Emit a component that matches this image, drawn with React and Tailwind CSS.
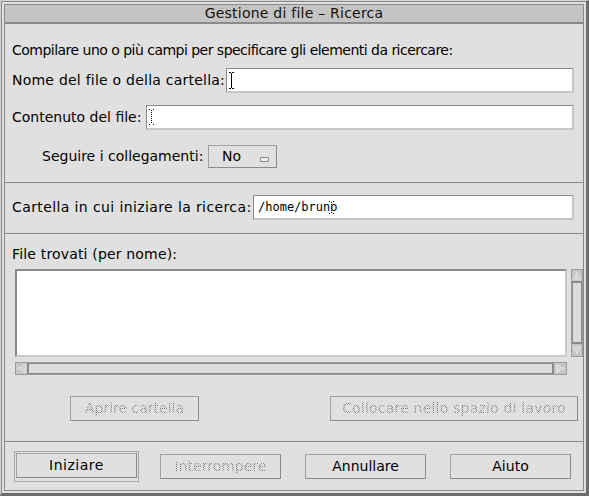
const stip =
  "bg-[image:repeating-conic-gradient(#787878_0%_25%,transparent_0%_50%)] bg-[length:2px_2px] bg-clip-text text-transparent";

function IBeam() {
  return (
    <svg width="5" height="17" viewBox="0 0 5 17" className="shrink-0">
      <g fill="#000">
        <rect x="0" y="0" width="2" height="1" />
        <rect x="3" y="0" width="2" height="1" />
        <rect x="2" y="1" width="1" height="15" />
        <rect x="0" y="16" width="2" height="1" />
        <rect x="3" y="16" width="2" height="1" />
      </g>
    </svg>
  );
}

function DottedBeam({ h = 17 }) {
  const dots = [];
  for (let y = 1; y < h - 1; y += 2) dots.push(<rect key={y} x="2" y={y} width="1" height="1" />);
  return (
    <svg width="5" height={h} viewBox={`0 0 5 ${h}`} className="shrink-0">
      <g fill="#000">
        <rect x="0" y="0" width="1" height="1" />
        <rect x="4" y="0" width="1" height="1" />
        {dots}
        <rect x="0" y={h - 1} width="1" height="1" />
        <rect x="4" y={h - 1} width="1" height="1" />
      </g>
    </svg>
  );
}

function Arrow({ dir }) {
  const pts = {
    up: "1.5,9.5 5.5,1.5 9.5,9.5",
    down: "1.5,1.5 5.5,9.5 9.5,1.5",
    left: "9.5,1.5 1.5,5.5 9.5,9.5",
    right: "1.5,1.5 9.5,5.5 1.5,9.5",
  }[dir];
  return (
    <svg width="11" height="11" viewBox="0 0 11 11">
      <polygon points={pts} fill="#d4d4d4" stroke="#f4f4f4" strokeWidth="1" strokeDasharray="1 1" />
    </svg>
  );
}

function Input({ children, className = "" }) {
  return (
    <div
      className={
        "h-[25px] bg-white border-t border-l border-[#8a8a8a] border-b-2 border-r-2 border-b-[#c6c6c6] border-r-[#c6c6c6] flex items-center " +
        className
      }
    >
      {children}
    </div>
  );
}

function Btn({ children, disabled, className = "", textClass = "" }) {
  return (
    <div
      className={
        "h-[25px] bg-[#e0e0e0] border border-[#a2a2a2] border-b-[#8a8a8a] border-r-[#8a8a8a] flex items-center justify-center " +
        className
      }
    >
      <span className={(disabled ? stip : "") + " " + textClass}>{children}</span>
    </div>
  );
}

function Sep() {
  return <div className="h-px bg-[#8a8a8a] shrink-0" />;
}

export default function App() {
  return (
    <div className="w-[589px] h-[496px] bg-[#e0e0e0] border-t border-l border-[#d2d2d2] border-r-[3px] border-b-[3px] border-r-[#6c6c6c] border-b-[#6c6c6c] font-['DejaVu_Sans',sans-serif] text-[14px] leading-[17px] text-black overflow-hidden">
      <div className="h-full border-t border-l border-[#8a8a8a] p-[2px]">
        <div className="h-full border border-[#8a8a8a] flex flex-col">
          <div className="h-[19px] shrink-0 bg-[#c4c4c4] border-b-2 border-[#8a8a8a] flex items-center justify-center text-[#111] tracking-[0.23px]">
            Gestione di file – Ricerca
          </div>

          {/* Section 1 */}
          <div className="pt-[18px] pb-[14px] pl-[7px] pr-[9px] flex flex-col">
            <div className="h-[17px] tracking-[-0.52px] whitespace-nowrap">
              Compilare uno o più campi per specificare gli elementi da ricercare:
            </div>
            <div className="mt-[9px] flex items-center">
              <span className="whitespace-nowrap w-[214px] shrink-0 tracking-[0.23px]">Nome del file o della cartella:</span>
              <Input className="flex-1 pl-[2px]">
                <IBeam />
              </Input>
            </div>
            <div className="mt-[12px] flex items-center">
              <span className="whitespace-nowrap w-[134px] shrink-0">Contenuto del file:</span>
              <Input className="flex-1 pl-[2px]">
                <DottedBeam h={16} />
              </Input>
            </div>
            <div className="mt-[15px] flex items-center pl-[30px]">
              <span className="whitespace-nowrap w-[166px] shrink-0">Seguire i collegamenti:</span>
              <div className="w-[69px] h-[23px] border border-[#a2a2a2] border-b-[#8a8a8a] border-r-[#8a8a8a] flex items-center pl-[13px]">
                <span>No</span>
                <div className="ml-[19px] mt-[5px] w-[9px] h-[5px] rounded-[1px] border border-[#8a8a8a] bg-[#ececec]" />
              </div>
            </div>
          </div>
          <Sep />

          {/* Section 2 */}
          <div className="pt-[12px] pb-[13px] pl-[7px] pr-[9px] flex items-center">
            <span className="whitespace-nowrap w-[241px] shrink-0 tracking-[0.39px]">Cartella in cui iniziare la ricerca:</span>
            <Input className="flex-1 pl-[4px]">
              <span className="font-['DejaVu_Sans_Mono',monospace] text-[12px] relative">
                /home/brun
                <span className="relative">
                  o
                  <span className="absolute left-[-1px] top-[1px]">
                    <DottedBeam h={13} />
                  </span>
                </span>
              </span>
            </Input>
          </div>
          <Sep />

          {/* Section 3 */}
          <div className="pt-[12px] pb-[20px] flex flex-col">
            <div className="pl-[7px] h-[17px] tracking-[0.17px]">File trovati (per nome):</div>
            <div className="mt-[6px] pl-[10px] flex">
              <div className="w-[552px] h-[88px] bg-white border-t-2 border-l-2 border-[#8a8a8a] border-b-2 border-r-2 border-b-[#cacaca] border-r-[#cacaca]" />
              <div className="ml-[4px] w-[12px] h-[88px] border border-[#9a9a9a] bg-[#c6c6c6] flex flex-col">
                <div className="h-[11px] flex items-center justify-center"><Arrow dir="up" /></div>
                <div className="flex-1 bg-[#dcdcdc] border-t-2 border-b-2 border-l border-r border-[#8a8a8a]" />
                <div className="h-[12px] flex items-center justify-center"><Arrow dir="down" /></div>
              </div>
            </div>
            <div className="mt-[5px] ml-[10px] w-[552px] h-[13px] border border-[#9a9a9a] bg-[#c6c6c6] flex">
              <div className="w-[11px] flex items-center justify-center"><Arrow dir="left" /></div>
              <div className="flex-1 bg-[#dcdcdc] border-l-2 border-r-2 border-t border-b border-[#8a8a8a]" />
              <div className="w-[12px] flex items-center justify-center"><Arrow dir="right" /></div>
            </div>
            <div className="mt-[21px] flex">
              <Btn disabled className="ml-[65px] w-[129px]">Aprire cartella</Btn>
              <Btn disabled className="ml-auto mr-[5px] w-[248px]" textClass="tracking-[0.2px]">
                Collocare nello spazio di lavoro
              </Btn>
            </div>
          </div>
          <Sep />

          {/* Section 4 */}
          <div className="pt-[12px] pl-[12px] flex gap-[24px]">
            <div className="-m-[3px] p-[1px] border border-[#a8a8a8]">
              <Btn className="w-[121px] border-[#7c7c7c]" textClass="tracking-[0.5px]">Iniziare</Btn>
            </div>
            <Btn disabled className="w-[121px]">Interrompere</Btn>
            <Btn className="w-[121px]">Annullare</Btn>
            <Btn className="w-[121px]">Aiuto</Btn>
          </div>
        </div>
      </div>
    </div>
  );
}
